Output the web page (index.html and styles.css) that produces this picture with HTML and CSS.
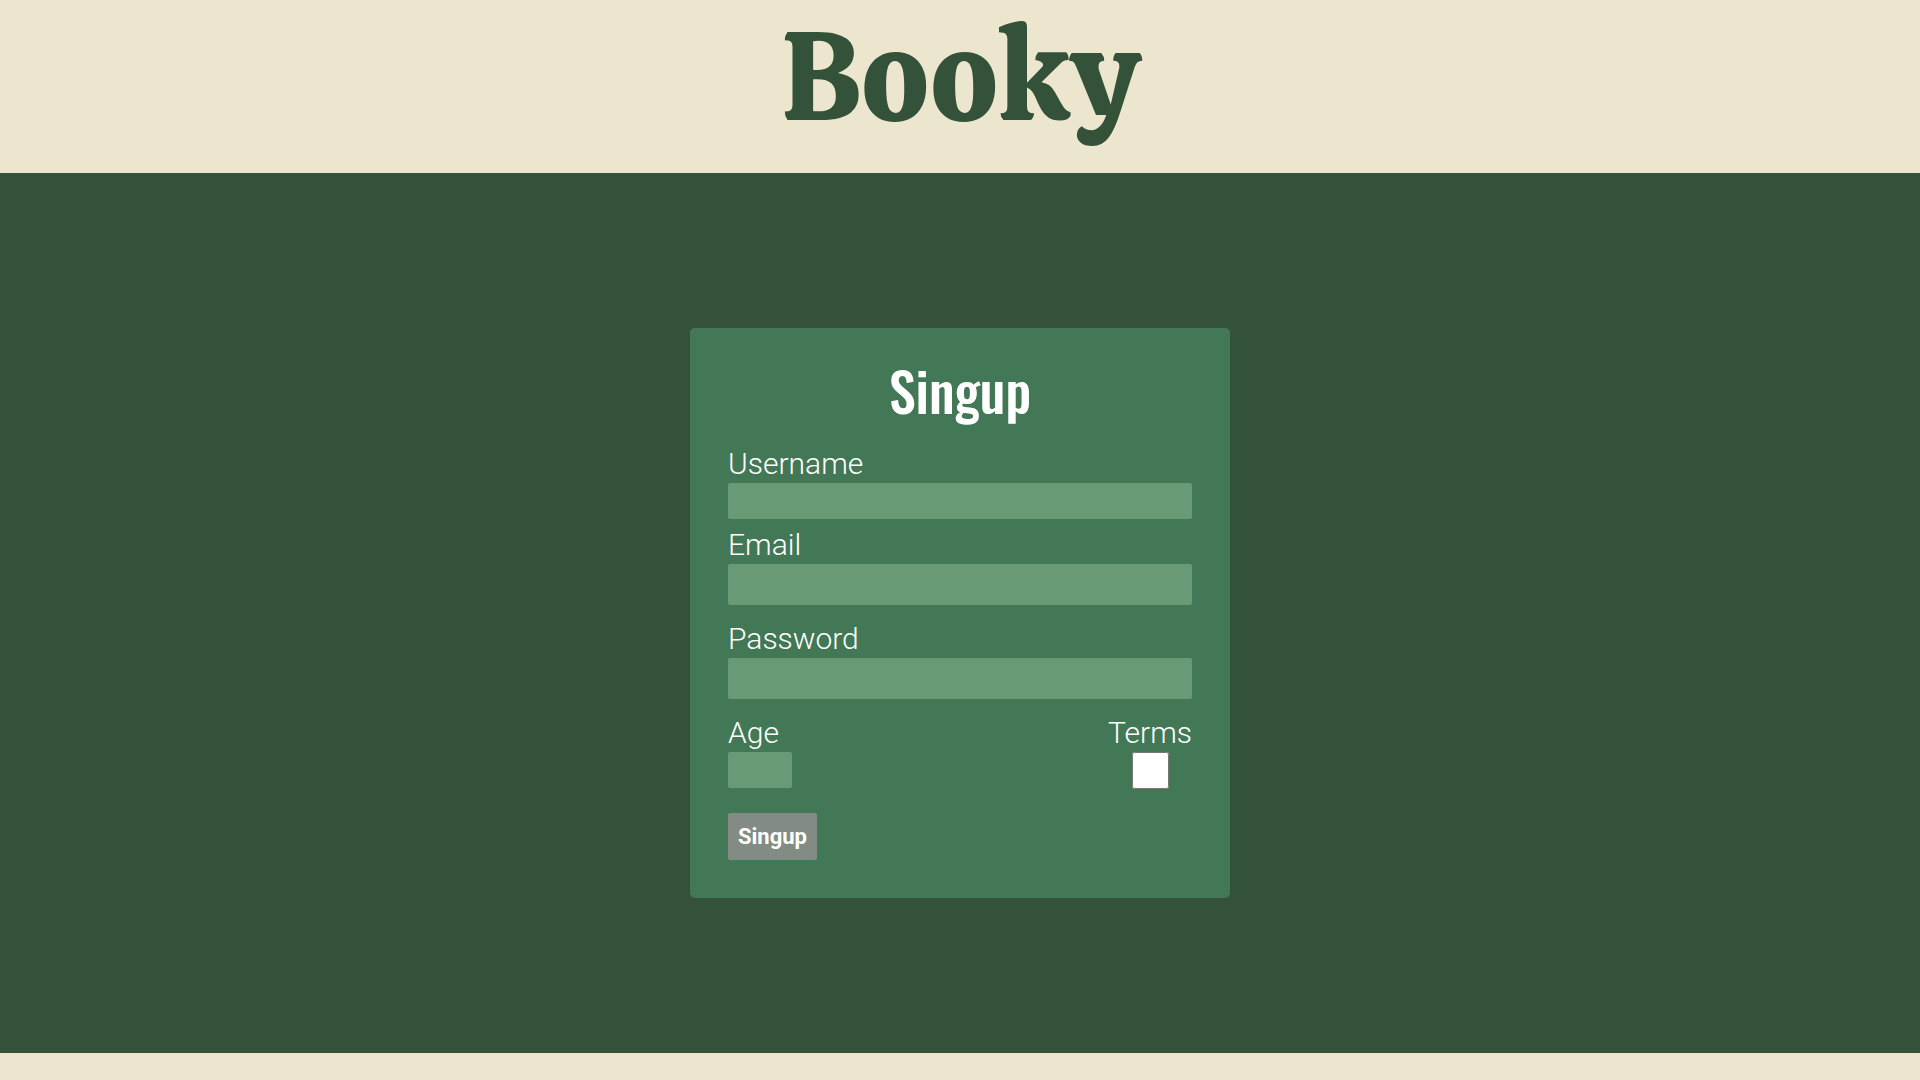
FILE: index.html
```html
<!DOCTYPE html>
<html lang="en">
<head>
<meta charset="utf-8">
<meta name="viewport" content="width=device-width, initial-scale=1">
<title>Booky</title>
<link rel="stylesheet" href="styles.css">
</head>
<body>
<header class="header"><h1 class="logo">Booky</h1></header>
<main class="main">
  <form class="card">
    <h2 class="title">Singup</h2>
    <div class="field field-compact">
      <label for="username">Username</label>
      <input class="input input-short" id="username" type="text">
    </div>
    <div class="field">
      <label for="email">Email</label>
      <input class="input" id="email" type="email">
    </div>
    <div class="field">
      <label for="password">Password</label>
      <input class="input" id="password" type="password">
    </div>
    <div class="row">
      <div class="field age">
        <label for="age">Age</label>
        <input class="input input-short" id="age" type="number">
      </div>
      <div class="field terms">
        <label for="terms">Terms</label>
        <input class="checkbox" id="terms" type="checkbox">
      </div>
    </div>
    <button class="submit" type="submit">Singup</button>
  </form>
</main>
<footer class="footer"></footer>
</body>
</html>
```
FILE: styles.css
```css
* {
  box-sizing: border-box;
}

body {
  margin: 0;
  min-height: 100vh;
  display: flex;
  flex-direction: column;
  background: #335239;
  color: #fff;
  font-family: Roboto, sans-serif;
}

.header {
  padding: 0 16px 19px;
  background: #ede6cf;
  text-align: center;
}

.logo {
  margin: 0;
  color: #335239;
  font: 400 125px/154px Calistoga, "Liberation Serif", serif;
}

.main {
  flex: 1;
  display: flex;
  align-items: center;
  justify-content: center;
  padding: 32px 16px;
}

.card {
  width: 100%;
  max-width: 540px;
  padding: 38px;
  border-radius: 5px;
  background: #427855;
}

.title {
  margin: 0 0 33px;
  font: 500 54px/48px Oswald, Roboto, sans-serif;
  text-align: center;
}

.field {
  display: flex;
  flex-direction: column;
  gap: 2px;
  margin-bottom: 17px;
  font-size: 30px;
  font-weight: 300;
  line-height: 34px;
}

.field-compact {
  margin-bottom: 9px;
}

.input {
  width: 100%;
  height: 41px;
  padding: 0 8px;
  border: 0;
  border-radius: 2px;
  background: #689a75;
  color: #fff;
  font: 300 24px Roboto, sans-serif;
}

.input-short {
  height: 36px;
}

.row {
  display: flex;
  justify-content: space-between;
}

.row .field {
  margin-bottom: 24px;
}

.age {
  width: 64px;
}

.terms {
  align-items: center;
}

.checkbox {
  width: 37px;
  height: 37px;
  margin: 0;
}

.submit {
  display: block;
  height: 47px;
  padding: 0 10px;
  border: 0;
  border-radius: 2px;
  background: #838c84;
  color: #fff;
  font: bold 22px Roboto, sans-serif;
}

.footer {
  height: 27px;
  background: #ede6cf;
}
```
